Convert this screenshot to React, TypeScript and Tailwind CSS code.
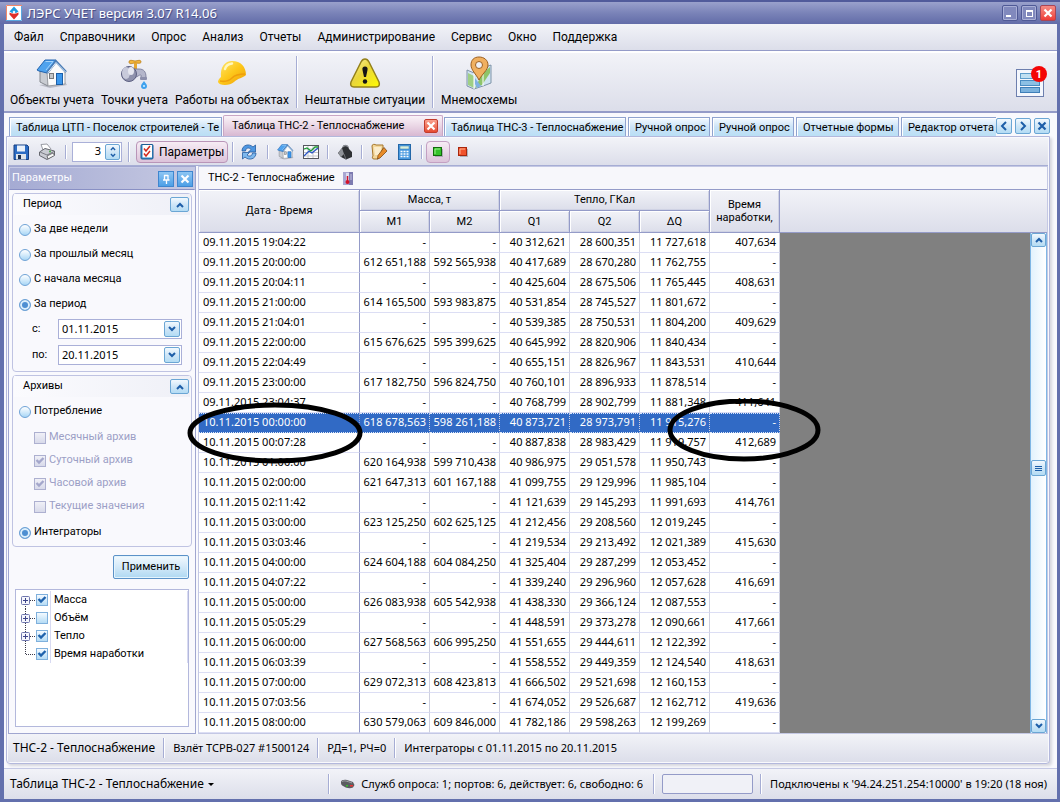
import type { ReactNode } from 'react';

type Row = [string, string, string, string, string, string, string];

const ROWS: Row[] = [
  ['09.11.2015 19:04:22', '-', '-', '40 312,621', '28 600,351', '11 727,618', '407,634'],
  ['09.11.2015 20:00:00', '612 651,188', '592 565,938', '40 417,689', '28 670,280', '11 762,755', '-'],
  ['09.11.2015 20:04:11', '-', '-', '40 425,604', '28 675,506', '11 765,445', '408,631'],
  ['09.11.2015 21:00:00', '614 165,500', '593 983,875', '40 531,854', '28 745,527', '11 801,672', '-'],
  ['09.11.2015 21:04:01', '-', '-', '40 539,385', '28 750,531', '11 804,200', '409,629'],
  ['09.11.2015 22:00:00', '615 676,625', '595 399,625', '40 645,992', '28 820,906', '11 840,434', '-'],
  ['09.11.2015 22:04:49', '-', '-', '40 655,151', '28 826,967', '11 843,531', '410,644'],
  ['09.11.2015 23:00:00', '617 182,750', '596 824,750', '40 760,101', '28 896,933', '11 878,514', '-'],
  ['09.11.2015 23:04:37', '-', '-', '40 768,799', '28 902,799', '11 881,348', '411,641'],
  ['10.11.2015 00:00:00', '618 678,563', '598 261,188', '40 873,721', '28 973,791', '11 915,276', '-'],
  ['10.11.2015 00:07:28', '-', '-', '40 887,838', '28 983,429', '11 919,757', '412,689'],
  ['10.11.2015 01:00:00', '620 164,938', '599 710,438', '40 986,975', '29 051,578', '11 950,743', '-'],
  ['10.11.2015 02:00:00', '621 647,313', '601 167,188', '41 099,755', '29 129,996', '11 985,104', '-'],
  ['10.11.2015 02:11:42', '-', '-', '41 121,639', '29 145,293', '11 991,693', '414,761'],
  ['10.11.2015 03:00:00', '623 125,250', '602 625,125', '41 212,456', '29 208,560', '12 019,245', '-'],
  ['10.11.2015 03:03:46', '-', '-', '41 219,534', '29 213,492', '12 021,389', '415,630'],
  ['10.11.2015 04:00:00', '624 604,188', '604 084,250', '41 325,404', '29 287,299', '12 053,452', '-'],
  ['10.11.2015 04:07:22', '-', '-', '41 339,240', '29 296,960', '12 057,628', '416,691'],
  ['10.11.2015 05:00:00', '626 083,938', '605 542,938', '41 438,330', '29 366,124', '12 087,553', '-'],
  ['10.11.2015 05:05:29', '-', '-', '41 448,591', '29 373,278', '12 090,661', '417,661'],
  ['10.11.2015 06:00:00', '627 568,563', '606 995,250', '41 551,655', '29 444,611', '12 122,392', '-'],
  ['10.11.2015 06:03:39', '-', '-', '41 558,552', '29 449,359', '12 124,540', '418,631'],
  ['10.11.2015 07:00:00', '629 072,313', '608 423,813', '41 666,502', '29 521,698', '12 160,153', '-'],
  ['10.11.2015 07:03:56', '-', '-', '41 674,052', '29 526,687', '12 162,712', '419,636'],
  ['10.11.2015 08:00:00', '630 579,063', '609 846,000', '41 782,186', '29 598,263', '12 199,269', '-'],
];
const SELECTED = 9;

const MENU = ['Файл', 'Справочники', 'Опрос', 'Анализ', 'Отчеты', 'Администрирование', 'Сервис', 'Окно', 'Поддержка'];

/* ---------- icons ---------- */

function LogoIcon() {
  return (
    <svg width="16" height="16" viewBox="0 0 16 16" aria-hidden="true">
      <rect width="16" height="16" fill="#fff" />
      <path d="M.5 16V.5H16" fill="none" stroke="#f0876a" />
      <path d="M15.500 1V15.500H0" fill="none" stroke="#5aa7e0" />
      <path d="M8 1.500L12.500 6.500L10 8H6L3.500 6.500Z" fill="#1e9be0" />
      <path d="M8 14.500L3.500 9.500V7.500L6 8.500H10L12.500 7.500V9.500Z" fill="#e02f28" />
      <path d="M6.500 7L8 5.500L9.500 7L8 9Z" fill="#fff" />
    </svg>
  );
}

function HouseIcon({ size }: { size: number }) {
  return (
    <svg width={size} height={size} viewBox="0 0 32 32" aria-hidden="true">
      <path d="M3 28L14 31L31 28L29 25Z" fill="#9b9eaa" fillOpacity=".6" />
      <path d="M4 14L12 15V29L4 25Z" fill="#c9ccd2" stroke="#84888f" />
      <path d="M11 15L20 4L29 14V27L12 29Z" fill="#fbfbfb" stroke="#9a9da3" />
      <path d="M1 13L9 3L20 3L11 16L3 14Z" fill="#4fa3ee" stroke="#2263ae" />
      <path d="M9.500 4.500L17 4.500L10 13" fill="none" stroke="#a5d4fb" />
      <path d="M11 16L20 4.500L30 15" fill="none" stroke="#4a7cb5" strokeWidth="2.500" />
      <path d="M12 15.500L20 5.500L29.500 15" fill="none" stroke="#e4f1fd" />
      <rect x="20.500" y="16.500" width="6" height="11" fill="#3c97ec" stroke="#1c5ea8" />
      <rect x="13.500" y="16.500" width="4" height="5" fill="#c3c6c9" stroke="#77797d" />
    </svg>
  );
}

function TapIcon() {
  return (
    <svg width="32" height="32" viewBox="0 0 32 32" aria-hidden="true">
      <path d="M10 5C10 2 15 4 16 4C18 4 22 2 22 5C22 7 18 6 16 6C14 6 10 8 10 5Z" fill="#f3b53c" stroke="#b57a17" strokeWidth=".8" />
      <rect x="15" y="6" width="3" height="6" fill="#e6a733" />
      <path d="M12 12H20C25 12 27 15 27 20V22H22V19C22 17 21 18 19 19L12 23Z" fill="#b4b6cb" stroke="#6e7190" strokeWidth=".8" />
      <circle cx="10" cy="17" r="7.500" fill="#8f92ad" stroke="#5d6082" />
      <ellipse cx="7" cy="16" rx="4" ry="6" fill="#c8cadb" />
      <ellipse cx="12" cy="14" rx="3" ry="4" fill="#e6e7f0" />
      <rect x="21" y="20" width="7" height="3" rx="1" fill="#8c8fac" />
      <path d="M25 24C26 26 28 27 28 29A2.800 2.800 0 0 1 22 29C22 27 24 26 25 24Z" fill="#3ea1ee" />
      <circle cx="25" cy="29" r="1" fill="#d6f0ff" />
    </svg>
  );
}

function HelmetIcon() {
  return (
    <svg width="32" height="32" viewBox="0 0 32 32" aria-hidden="true">
      <defs>
        <linearGradient id="helmet" x1="0" y1="0" x2="1" y2="1">
          <stop offset="0" stopColor="#ffe873" />
          <stop offset=".5" stopColor="#fdc81b" />
          <stop offset="1" stopColor="#ee9c07" />
        </linearGradient>
      </defs>
      <path d="M5 20C4 10 9 4 16 4C25 4 30 10 30 18C27 21 22 21 18 25C14 29 3 29 2 25C2 23 3 22 5 20Z" fill="url(#helmet)" />
      <path d="M4 24C9 25 13 24 16 21C20 17 25 17 29 17" fill="none" stroke="#ef9f0c" strokeWidth="1.500" />
      <path d="M9 12C10 8 12 7 16 6.500" fill="none" stroke="#fff7bd" strokeWidth="2.500" strokeLinecap="round" />
    </svg>
  );
}

function WarningIcon() {
  return (
    <svg width="34" height="32" viewBox="0 0 34 32" aria-hidden="true">
      <defs>
        <linearGradient id="warn" x1="0" y1="0" x2="1" y2="1">
          <stop offset="0" stopColor="#fdf6a8" />
          <stop offset=".45" stopColor="#e9d53a" />
          <stop offset="1" stopColor="#fffc00" />
        </linearGradient>
      </defs>
      <path d="M17 2C19 2 20 3 21 5L31 25C32 28 31 30 28 30H6C3 30 2 28 3 25L13 5C14 3 15 2 17 2Z" fill="url(#warn)" stroke="#94811a" strokeWidth="1.500" />
      <path d="M17 9.500C19 9.500 20 11 19.500 13L18 20H16L14.500 13C14 11 15 9.500 17 9.500Z" fill="#151515" />
      <circle cx="17" cy="24.500" r="2.200" fill="#151515" />
    </svg>
  );
}

function MapIcon() {
  return (
    <svg width="32" height="34" viewBox="0 0 32 34" aria-hidden="true">
      <path d="M4 14L11 17L20 12L28 9V27L20 30L11 33L4 30Z" fill="#cfe3f2" stroke="#7f93a8" />
      <path d="M5 17L11 20V32L5 29Z" fill="#9fcf85" />
      <path d="M12 32L19 18L27 11V17L19 29Z" fill="#8ec46a" />
      <path d="M12 22L18 30L14 32L12 28Z" fill="#7fb2e2" />
      <path d="M20 12L20 30M11 17V33" stroke="#fff" />
      <path d="M16 1C21 1 25 4 25 9C25 14 19 18 16 24C13 18 8 14 8 9C8 4 11 1 16 1Z" fill="#f0b060" stroke="#9c5f1e" />
      <circle cx="16" cy="9" r="3.500" fill="#eef0f6" stroke="#9c5f1e" />
    </svg>
  );
}

function NoticeIcon() {
  return (
    <svg width="32" height="32" viewBox="0 0 32 32" aria-hidden="true">
      <rect x="1.500" y="3.500" width="27" height="27" fill="#f4f7fd" stroke="#6d7fae" />
      <rect x="5.500" y="7.500" width="19" height="5" fill="#bfe0f2" stroke="#5d9dcb" />
      <rect x="5.500" y="14.500" width="19" height="5" fill="#8cc0e4" stroke="#4a8cc2" />
      <rect x="5.500" y="21.500" width="19" height="5" fill="#7bb2dd" stroke="#3f7fb8" />
    </svg>
  );
}

function SaveIcon() {
  return (
    <svg width="18" height="18" viewBox="0 0 18 18" aria-hidden="true">
      <path d="M2 2H15L16.500 3.500V16.500H2Z" fill="#2c6cc4" stroke="#173f80" />
      <rect x="5" y="2.500" width="8" height="6" fill="#e9f1fb" />
      <rect x="4" y="11" width="10" height="5.500" fill="#dfe4ea" />
      <rect x="6" y="12" width="3" height="4" fill="#1d2f4e" />
    </svg>
  );
}

function PrinterIcon() {
  return (
    <svg width="18" height="18" viewBox="0 0 18 18" aria-hidden="true">
      <path d="M5 7L3 1.500L9 1L13 6" fill="#fff" stroke="#9a9ca4" />
      <path d="M1.500 9L7 5.500L16.500 8V12L9 16.500L1.500 12.500Z" fill="#c9cbd2" stroke="#65676e" />
      <path d="M2 9L9 12L16 8.500" fill="none" stroke="#7c7e86" />
      <path d="M9 13L15 10L16.500 12.500L10 16Z" fill="#f7f7f7" stroke="#55575c" strokeWidth=".8" />
      <circle cx="12" cy="8.500" r="1" fill="#49a849" />
    </svg>
  );
}

function ChecklistIcon() {
  return (
    <svg width="16" height="18" viewBox="0 0 16 18" aria-hidden="true">
      <rect x="1" y="1.500" width="12" height="14.500" rx="1" fill="#2f86c8" stroke="#1f5d92" />
      <rect x="2.500" y="2" width="9.500" height="12.500" fill="#fdfdfd" />
      <path d="M4 5.500L6 8L10 3M4 10.500L6 13L10 8" fill="none" stroke="#d2291c" strokeWidth="1.500" />
    </svg>
  );
}

function RefreshIcon() {
  return (
    <svg width="18" height="18" viewBox="0 0 18 18" aria-hidden="true">
      <path d="M2 8C2 2 9 0 13 4L15.500 2V9H8.500L11 6.500C9 4 5.500 5 5.500 8Z" fill="#4d97e2" stroke="#245c9f" strokeWidth=".8" />
      <path d="M16 10C16 16 9 18 5 14L2.500 16V9.500H9.500L7 12C9 14 12.500 13 12.500 10Z" fill="#7db8ee" stroke="#245c9f" strokeWidth=".8" />
    </svg>
  );
}

function ChartIcon() {
  return (
    <svg width="16" height="16" viewBox="0 0 16 16" aria-hidden="true">
      <rect x=".5" y="1.500" width="15" height="13" fill="#fff" stroke="#55585e" />
      <path d="M1 5H15M1 8.500H15M1 12H15M5 2V14M10 2V14" stroke="#c3c6cc" />
      <path d="M1 12L6 7L9 9L15 4" fill="none" stroke="#2a55c8" strokeWidth="1.300" />
      <path d="M1 5L4 4L8 7L12 3H15" fill="none" stroke="#1d9a35" strokeWidth="1.300" />
    </svg>
  );
}

function WeightIcon() {
  return (
    <svg width="18" height="18" viewBox="0 0 18 18" aria-hidden="true">
      <path d="M2 10L6 5L8 2L12 3L13 6L16 9V14L10 16.500L5 14Z" fill="#2e3034" />
      <path d="M7 4C8 2 11 2 12 4" fill="none" stroke="#8a8d94" strokeWidth="1.500" />
      <path d="M2 10L6 5L8 11L5 14Z" fill="#8f9298" />
      <path d="M8 11L10 16.500" stroke="#6c6f75" />
    </svg>
  );
}

function ScrollEditIcon() {
  return (
    <svg width="18" height="18" viewBox="0 0 18 18" aria-hidden="true">
      <path d="M2 3C2 1 5 1 6 2H13V5L8 16H4C2 16 2 14 3 13Z" fill="#f3d79b" stroke="#a6762a" />
      <path d="M4 4H11V12H5Z" fill="#fbeccb" />
      <path d="M14 4.500L17 8L10 15L7.500 16L8 12.500Z" fill="#e88b28" stroke="#7c4b17" strokeWidth=".8" />
    </svg>
  );
}

function CalcIcon() {
  return (
    <svg width="16" height="18" viewBox="0 0 16 18" aria-hidden="true">
      <rect x="1.500" y="1.500" width="12" height="15" fill="#4b9be0" stroke="#2367a8" />
      <rect x="3" y="3" width="9" height="3" fill="#d9efdc" stroke="#3277b0" strokeWidth=".5" />
      <path d="M3.500 8.500H12M3.500 11H12M3.500 13.500H12" stroke="#fff" strokeWidth="1.500" strokeDasharray="2 1" />
    </svg>
  );
}

function SquareIcon({ tone }: { tone: 'green' | 'red' }) {
  return (
    <svg width="12" height="12" viewBox="0 0 12 12" aria-hidden="true">
      <rect x="3" y="3" width="8" height="8" fill="#8d8f9a" opacity=".6" />
      <rect x="1.500" y="1.500" width="8" height="8" fill={tone === 'green' ? '#35c22a' : '#f0522c'} stroke={tone === 'green' ? '#126b0c' : '#a8270d'} />
      <path d="M3 8V3H8" fill="none" stroke={tone === 'green' ? '#9cf08a' : '#ffb08e'} />
    </svg>
  );
}

function ThermoIcon() {
  return (
    <svg width="10" height="13" viewBox="0 0 10 13" aria-hidden="true">
      <rect width="10" height="13" fill="#a9a7d2" />
      <rect x="6" width="4" height="13" fill="#7d7bb0" />
      <rect x="3" y="1" width="3" height="9" fill="#dcdcf0" />
      <path d="M4.500 4V10" stroke="#d3122a" strokeWidth="1.500" />
      <circle cx="4.500" cy="10" r="2" fill="#d3122a" />
      <path d="M7 3H9M7 5H9M7 7H9" stroke="#d9d8f0" strokeWidth=".8" />
    </svg>
  );
}

function ModemIcon() {
  return (
    <svg width="15" height="10" viewBox="0 0 15 10" aria-hidden="true">
      <path d="M1 3C1 1 4 .5 7 1L13 3L14.500 6L13 8.500C10 10 6 9 4 7.500C1 6 1 5 1 3Z" fill="#5b5d61" />
      <path d="M2 3C3 1 7 2 12 4" fill="none" stroke="#a1a3a8" />
      <rect x="6" y="6" width="2" height="1.500" fill="#35c22a" />
      <rect x="10" y="6" width="3" height="1.500" fill="#e33" />
    </svg>
  );
}

function Chevron({ dir, className }: { dir: 'up' | 'down' | 'left' | 'right'; className?: string }) {
  const d = { up: 'M2 7L5 4L8 7', down: 'M2 3L5 6L8 3', left: 'M7 1L3 5L7 9', right: 'M3 1L7 5L3 9' }[dir];
  return (
    <svg width="10" height="10" viewBox="0 0 10 10" aria-hidden="true" className={className}>
      <path d={d} fill="none" stroke="currentColor" strokeWidth="2" />
    </svg>
  );
}

function Cross() {
  return (
    <svg width="10" height="10" viewBox="0 0 10 10" aria-hidden="true">
      <path d="M1.500 1.500L8.500 8.500M8.500 1.500L1.500 8.500" stroke="currentColor" strokeWidth="2.200" />
    </svg>
  );
}

/* ---------- controls ---------- */

const BAR = 'bg-linear-to-b from-[#f2f3f8] to-[#dcdeea]';
const BLUE = 'border border-[#6ba6d4] bg-linear-to-b from-[#f2f9fe] via-[#cfe6f7] to-[#b3dcf4] text-[#1d5ea8]';
const NOTO = "font-['Noto_Sans',sans-serif]";

function BigButton({ icon, label }: { icon: ReactNode; label: string }) {
  return (
    <button type="button" className="flex flex-col items-center justify-between">
      <span className="flex h-[34px] items-center">{icon}</span>
      <span className="leading-4">{label}</span>
    </button>
  );
}

function Sep({ className = 'h-5' }: { className?: string }) {
  return <span className={`w-0.5 shrink-0 border-l border-r border-l-[#a6add4] border-r-white ${className}`} />;
}

function IconButton({ label, children }: { label: string; children: ReactNode }) {
  return (
    <button type="button" aria-label={label} className="grid size-[26px] shrink-0 place-items-center">
      {children}
    </button>
  );
}

function Tab({ children, className = '' }: { children: ReactNode; className?: string }) {
  return (
    <button
      type="button"
      role="tab"
      aria-selected="false"
      className={`h-[19px] overflow-hidden border border-b-0 border-[#8fa3cf] bg-linear-to-b from-[#f4faff] via-[#cbe3f7] to-[#b9dff5] px-1.5 text-left leading-[19px] whitespace-nowrap shadow-[inset_1px_1px_0_#fff] ${className}`}
    >
      {children}
    </button>
  );
}

function Radio({ label, checked }: { label: string; checked?: boolean }) {
  return (
    <label className="flex h-[25px] items-center gap-[3px]">
      <input
        type="radio"
        name={label}
        defaultChecked={checked}
        className="size-3 appearance-none rounded-full border border-[#6fa3d6] bg-linear-to-b from-[#ffffff] via-[#d4ebfb] to-[#a8d6f5] checked:bg-none checked:bg-[#4d8fd2] checked:shadow-[inset_0_0_0_2px_#dceffc]"
      />
      {label}
    </label>
  );
}

function Check({ label, checked, disabled, hidden }: { label: string; checked?: boolean; disabled?: boolean; hidden?: boolean }) {
  return (
    <label className={`flex items-center gap-[3px] ${disabled ? 'h-[23px] text-[#9c9fc6]' : ''}`}>
      <span className="grid size-3 place-items-center">
        <input
          type="checkbox"
          defaultChecked={checked}
          disabled={disabled}
          aria-label={label}
          className={`size-3 appearance-none border [grid-area:1/1] ${
            disabled
              ? 'border-[#adb0d0] bg-linear-to-b from-[#f0f0f7] to-[#d8daea]'
              : 'border-[#7fb0dc] bg-linear-to-b from-[#f4faff] to-[#b5dcf5]'
          }`}
        />
        {checked && (
          <svg width="10" height="10" viewBox="0 0 10 10" aria-hidden="true" className="pointer-events-none [grid-area:1/1]">
            <path d="M1.500 4L4 6.500L8.500 2" fill="none" stroke={disabled ? '#a4a7cb' : '#1f62ac'} strokeWidth="2.400" />
          </svg>
        )}
      </span>
      {hidden ? null : label}
    </label>
  );
}

function DateField({ id, label, value }: { id: string; label: string; value: string }) {
  return (
    <div className="flex h-5 items-center">
      <label htmlFor={id} className="w-[26px]">{label}</label>
      <div className="flex h-5 flex-1 items-center border border-[#aab0d8] bg-white pr-px">
        <input id={id} defaultValue={value} className={`w-0 flex-1 bg-transparent px-[3px] outline-none ${NOTO}`} />
        <button type="button" aria-label="Выбрать дату" className={`grid size-4 place-items-center rounded-xs ${BLUE}`}>
          <Chevron dir="down" />
        </button>
      </div>
    </div>
  );
}

function Group({ title, children }: { title: string; children: ReactNode }) {
  return (
    <section className="rounded-sm border border-[#bfc3e2] bg-[#f9f9fd] px-px">
      <header className="flex h-[21px] items-center justify-between bg-linear-to-r from-[#fbfbfe] to-[#eff0f7] pr-px pl-[9px]">
        <h3>{title}</h3>
        <button type="button" aria-label="Свернуть" className={`grid h-[15px] w-[19px] place-items-center rounded-xs ${BLUE}`}>
          <Chevron dir="up" />
        </button>
      </header>
      {children}
    </section>
  );
}

function TreeItem({ label, checked, first, leaf }: { label: string; checked?: boolean; first?: boolean; leaf?: boolean }) {
  const stem = first ? 'M9.500 9V18' : leaf ? 'M9.500 0V9.500' : 'M9.500 0V18';
  return (
    <li className="flex h-[18px] items-stretch">
      <span className="grid w-5 shrink-0 place-items-center">
        <svg width="20" height="18" viewBox="0 0 20 18" aria-hidden="true">
          <path d={stem} stroke="#3a3a4a" strokeDasharray="1 1" />
          <path d="M10 9.500H20" stroke="#3a3a4a" strokeDasharray="1 1" />
          {!leaf && (
            <>
              <rect x="5.500" y="5.500" width="8" height="8" rx="1" fill="#f5f6fc" stroke="#6f76ad" />
              <path d="M7 9.500H12M9.500 7V12" stroke="#3d4488" />
            </>
          )}
        </svg>
      </span>
      <span className="flex w-[15px] items-center border-r border-[#d8daf2]">
        <Check label={label} checked={checked} hidden />
      </span>
      <span className="flex-1 self-center border-r border-[#d8daf2] pl-[3px] leading-[18px]">{label}</span>
    </li>
  );
}

const TH = `border-r border-b border-[#949bc8] font-normal shadow-[inset_1px_1px_0_#fff,inset_-1px_-1px_0_#cfd2e4] ${BAR}`;

export default function App() {
  return (
    <div className="flex min-h-screen flex-col border-r-[3px] border-b-4 border-l-4 border-[#6370ad] bg-[#f9f9fd] font-['Roboto','Noto_Sans',sans-serif] text-xs text-black">
      {/* title bar */}
      <div className="-mr-[3px] -ml-1 flex h-6 items-center border-t-2 border-[#515b9b] bg-linear-to-b from-[#9aa1cc] via-[#7a83b8] to-[#626ca8] pr-1 pl-1.5">
        <LogoIcon />
        <h1 className={`flex-1 pl-[5px] text-[13px] leading-5 text-white [text-shadow:1px_1px_1px_#3c4580] ${NOTO}`}>
          ЛЭРС УЧЕТ версия 3.07 R14.06
        </h1>
        <div className="flex gap-[3px]">
          <button type="button" aria-label="Свернуть" className="flex size-4 items-end rounded-xs border border-[#4f5996] bg-[#8189bd] p-[3px] shadow-[inset_0_0_0_1px_#a9afd6]">
            <span className="h-0.5 w-[5px] bg-white" />
          </button>
          <button type="button" aria-label="Развернуть" className="grid size-4 place-items-center rounded-xs border border-[#4f5996] bg-[#8189bd] shadow-[inset_0_0_0_1px_#a9afd6]">
            <span className="h-[7px] w-[7px] border border-t-2 border-white" />
          </button>
          <button type="button" aria-label="Закрыть" className="grid size-4 place-items-center rounded-xs border border-[#a94555] bg-linear-to-b from-[#f58a84] to-[#ee3a36] text-white">
            <Cross />
          </button>
        </div>
      </div>

      {/* main menu */}
      <nav className={`flex h-[27px] items-center gap-4 border-b border-[#949bc8] pl-2.5 ${BAR}`}>
        {MENU.map((m) => (
          <button key={m} type="button">{m}</button>
        ))}
      </nav>

      {/* main toolbar */}
      <div className={`flex h-[62px] items-stretch border-t-2 border-b-2 border-t-white border-b-[#949bc8] py-[3px] pl-1.5 ${BAR}`}>
        <div className="flex gap-[7px]">
          <BigButton icon={<HouseIcon size={32} />} label="Объекты учета" />
          <BigButton icon={<TapIcon />} label="Точки учета" />
          <BigButton icon={<HelmetIcon />} label="Работы на объектах" />
          <Sep className="h-full" />
          <BigButton icon={<WarningIcon />} label="Нештатные ситуации" />
          <Sep className="h-full" />
          <BigButton icon={<MapIcon />} label="Мнемосхемы" />
        </div>
        <button type="button" aria-label="Уведомления" className="relative mr-2.5 ml-auto self-center">
          <NoticeIcon />
          <span className="absolute top-0 right-0 grid size-4 place-items-center rounded-full bg-[#f40505] text-[11px] leading-none font-bold text-white">1</span>
        </button>
      </div>

      {/* document area */}
      <main className="flex flex-1 flex-col pr-[7px] pb-1 pl-0.5">
        <div className="flex items-end pt-0.5 pl-[3px] text-[11px]">
          <div role="tablist" className="flex min-w-0 flex-1 items-end gap-0.5 overflow-hidden">
            <Tab className="w-[213px] shrink-0">Таблица ЦТП - Поселок строителей - Те</Tab>
            <div className="-mx-px flex h-[21px] w-[220px] shrink-0 items-center justify-between rounded-t-xs border border-b-0 border-[#c9a6c4] bg-linear-to-b from-[#faf3f8] via-[#ead6e5] to-[#d8b8d2] pr-1 pl-2">
              <button type="button" role="tab" aria-selected="true" className="whitespace-nowrap">Таблица ТНС-2 - Теплоснабжение</button>
              <button type="button" aria-label="Закрыть вкладку" className="grid size-[14px] place-items-center rounded-xs border border-[#c23c2c] bg-linear-to-b from-[#f9a08e] to-[#e6482f] text-white">
                <Cross />
              </button>
            </div>
            <Tab className="w-[182px] shrink-0">Таблица ТНС-3 - Теплоснабжение</Tab>
            <Tab className="w-[82px] shrink-0">Ручной опрос</Tab>
            <Tab className="w-[82px] shrink-0">Ручной опрос</Tab>
            <Tab className="w-[103px] shrink-0">Отчетные формы</Tab>
            <Tab className="w-[110px] shrink-0">Редактор отчета</Tab>
          </div>
          <div className="flex gap-[3px] pb-0.5">
            <button type="button" aria-label="Предыдущие вкладки" className={`grid size-4 place-items-center rounded-xs ${BLUE}`}><Chevron dir="left" /></button>
            <button type="button" aria-label="Следующие вкладки" className={`grid size-4 place-items-center rounded-xs ${BLUE}`}><Chevron dir="right" /></button>
            <button type="button" aria-label="Закрыть" className={`grid size-4 place-items-center rounded-xs ${BLUE}`}><Cross /></button>
          </div>
        </div>

        <div className="flex flex-1 flex-col rounded-b-sm border border-[#b3b8dc] bg-[#f9f9fd] p-px shadow-[2px_2px_3px_#d5d6de]">
          {/* document toolbar */}
          <div className={`flex h-7 items-center border-b border-[#a6add4] ${BAR}`}>
            <IconButton label="Сохранить"><SaveIcon /></IconButton>
            <IconButton label="Печать"><PrinterIcon /></IconButton>
            <div className="px-[5px]"><Sep /></div>
            <div className="mr-1.5 flex h-5 w-[50px] items-center border border-[#aab0d8] bg-white pr-px">
              <input aria-label="Точность" defaultValue="3" className={`w-0 flex-1 bg-transparent pr-1 text-right text-[11px] outline-none ${NOTO}`} />
              <span className={`flex h-4 w-[15px] flex-col items-center justify-center rounded-xs ${BLUE}`}>
                <button type="button" aria-label="Больше" className="h-[7px] overflow-hidden"><Chevron dir="up" className="h-[7px]" /></button>
                <button type="button" aria-label="Меньше" className="h-[7px] overflow-hidden"><Chevron dir="down" className="h-[7px]" /></button>
              </span>
            </div>
            <Sep />
            <button type="button" className="mr-1 ml-1.5 flex h-[22px] items-center gap-[3px] rounded-sm border border-[#b995b8] bg-linear-to-b from-[#f6ecf4] to-[#dcc3da] px-[3px]">
              <ChecklistIcon />
              Параметры
            </button>
            <Sep />
            <div className="px-0.5"><IconButton label="Обновить"><RefreshIcon /></IconButton></div>
            <div className="px-[3px]"><Sep /></div>
            <IconButton label="Объект"><HouseIcon size={17} /></IconButton>
            <IconButton label="График"><ChartIcon /></IconButton>
            <div className="px-[3px]"><Sep /></div>
            <IconButton label="Тарировка"><WeightIcon /></IconButton>
            <div className="px-[3px]"><Sep /></div>
            <IconButton label="Правка"><ScrollEditIcon /></IconButton>
            <IconButton label="Расчет"><CalcIcon /></IconButton>
            <div className="px-[3px]"><Sep /></div>
            <button type="button" aria-label="Включено" className="grid h-[22px] w-6 place-items-center rounded-sm border border-[#c3a0c2] bg-linear-to-b from-[#f6ecf4] to-[#dcc3da]">
              <SquareIcon tone="green" />
            </button>
            <IconButton label="Остановить"><SquareIcon tone="red" /></IconButton>
          </div>

          <div className="flex flex-1 gap-0.5 text-[11px]">
            {/* parameters pane */}
            <aside className="flex w-[188px] shrink-0 flex-col border border-[#a0a6d0] bg-[#f9f9fd]">
              <div className="flex h-[23px] items-center gap-[3px] border border-b-[#8990c4] border-[#c4c8e4] bg-linear-to-r from-[#a5abd3] to-[#c6c9e2] pr-px pl-0.5 text-[#fdfdff]">
                <h2 className="flex-1">Параметры</h2>
                <button type="button" aria-label="Закрепить" className="grid size-4 place-items-center border border-[#3f86cf] bg-linear-to-b from-[#8ec5f3] to-[#4c9fe6]">
                  <svg width="10" height="10" viewBox="0 0 10 10" aria-hidden="true">
                    <path d="M3 1.500H7M3.500 1V6M7 1V6M2 6H8.500M5.500 6V10" fill="none" stroke="currentColor" strokeWidth="1.300" />
                  </svg>
                </button>
                <button type="button" aria-label="Закрыть панель" className="grid size-4 place-items-center border border-[#3f86cf] bg-linear-to-b from-[#8ec5f3] to-[#4c9fe6]">
                  <Cross />
                </button>
              </div>
              <div className="flex flex-1 flex-col px-[3px] pt-[3px] pb-1.5">
                <Group title="Период">
                  <div className="flex flex-col px-[5px] pt-0.5 pb-1">
                    <Radio label="За две недели" />
                    <Radio label="За прошлый месяц" />
                    <Radio label="С начала месяца" />
                    <Radio label="За период" checked />
                    <div className="flex flex-col gap-1.5 pt-0.5 pr-[3px] pb-0.5 pl-[13px]">
                      <DateField id="date-from" label="с:" value="01.11.2015" />
                      <DateField id="date-to" label="по:" value="20.11.2015" />
                    </div>
                  </div>
                </Group>
                <div className="h-[3px]" />
                <Group title="Архивы">
                  <div className="flex flex-col px-[5px] pt-0.5 pb-px">
                    <Radio label="Потребление" />
                    <div className="pt-0.5 pb-0.5 pl-[15px]">
                      <Check label="Месячный архив" disabled />
                      <Check label="Суточный архив" disabled checked />
                      <Check label="Часовой архив" disabled checked />
                      <Check label="Текущие значения" disabled />
                    </div>
                    <Radio label="Интеграторы" checked />
                  </div>
                </Group>
                <button type="button" className="mt-2 mr-[3px] mb-2.5 h-6 w-[76px] self-end rounded-xs border border-[#5b92c8] bg-linear-to-b from-[#f2f9fe] via-[#d3e9f8] to-[#aed8f2] shadow-[inset_0_0_0_1px_#e4f4fd]">
                  Применить
                </button>
                <ul className="mx-[3px] flex-1 border border-[#b3b8dc] bg-white pt-px">
                  <TreeItem label="Масса" checked first />
                  <TreeItem label="Объём" />
                  <TreeItem label="Тепло" checked />
                  <TreeItem label="Время наработки" checked leaf />
                </ul>
              </div>
            </aside>

            {/* readings */}
            <section className="relative flex min-w-0 flex-1 flex-col border border-[#c4c8e4]">
              <div className="flex h-[22px] items-center gap-2 bg-[#f7f7fb] pl-[9px]">
                <h2>ТНС-2 - Теплоснабжение</h2>
                <ThermoIcon />
              </div>
              <div className="flex flex-1 border-t border-[#949bc8]">
                <table className="w-[581px] shrink-0 table-fixed border-separate border-spacing-0 self-start bg-white">
                  <colgroup>
                    <col className="w-[161px]" />
                    <col className="w-[70px]" />
                    <col className="w-[70px]" />
                    <col className="w-[70px]" />
                    <col className="w-[70px]" />
                    <col className="w-[70px]" />
                    <col className="w-[70px]" />
                  </colgroup>
                  <thead>
                    <tr className="h-[21px]">
                      <th rowSpan={2} className={TH}>Дата - Время</th>
                      <th colSpan={2} className={`h-[21px] leading-4 ${TH}`}>Масса, т</th>
                      <th colSpan={3} className={`h-[21px] leading-4 ${TH}`}>Тепло, ГКал</th>
                      <th rowSpan={2} className={`leading-[13px] ${TH}`}>Время наработки,</th>
                    </tr>
                    <tr className="h-[22px]">
                      {['M1', 'M2', 'Q1', 'Q2', 'ΔQ'].map((h) => (
                        <th key={h} className={`h-[22px] leading-4 ${TH}`}>{h}</th>
                      ))}
                    </tr>
                  </thead>
                  <tbody className={NOTO}>
                    {ROWS.map((r, i) => (
                      <tr key={r[0]} className={i === SELECTED ? 'bg-[#316ac5] text-white' : ''}>
                        {r.map((v, c) => (
                          <td
                            key={c}
                            className={`h-5 border-b pt-0 pb-0.5 leading-4 whitespace-nowrap ${
                              i === SELECTED ? 'border-t border-dotted border-y-[#dce6f8]' : 'border-b-[#dcdef4]'
                            } ${c === 0 ? 'border-r border-r-[#949bc8] pl-1 text-left' : 'border-r border-r-[#cdcfdf] pr-[3px] text-right'}`}
                          >
                            {v}
                          </td>
                        ))}
                      </tr>
                    ))}
                  </tbody>
                </table>
                <div className="flex flex-1 flex-col">
                  <div className={`h-[43px] border-b border-[#949bc8] ${BAR}`} />
                  <div className="flex flex-1 bg-[#808080]">
                    <div className="ml-auto flex w-[17px] flex-col border-x border-[#7fb6e4] bg-linear-to-r from-[#e2f2fd] to-white">
                      <button type="button" aria-label="Вверх" className={`grid h-[14px] place-items-center rounded-xs ${BLUE}`}><Chevron dir="up" /></button>
                      <div className="flex-[213]" />
                      <button type="button" aria-label="Полоса прокрутки" className={`grid h-4 place-items-center rounded-xs ${BLUE}`}>
                        <span className="flex flex-col gap-px">
                          <span className="h-px w-[7px] bg-[#1d5ea8]" />
                          <span className="h-px w-[7px] bg-[#1d5ea8]" />
                          <span className="h-px w-[7px] bg-[#1d5ea8]" />
                        </span>
                      </button>
                      <div className="flex-[243]" />
                      <button type="button" aria-label="Вниз" className={`grid h-[14px] place-items-center rounded-xs ${BLUE}`}><Chevron dir="down" /></button>
                    </div>
                  </div>
                </div>
              </div>
              {/* hand-drawn marks over the table */}
              <svg className="pointer-events-none absolute top-[232px] -left-[14px]" width="640" height="70" viewBox="0 0 640 70" aria-hidden="true">
                <ellipse cx="90" cy="34" rx="85" ry="28" fill="none" stroke="#000" strokeWidth="5" />
                <ellipse cx="559" cy="31" rx="74" ry="29" fill="none" stroke="#000" strokeWidth="5" />
              </svg>
            </section>
          </div>

          {/* document status bar */}
          <div className={`flex h-7 items-center gap-2 pl-[5px] text-[11px] ${NOTO} ${BAR}`}>
            <span className="text-xs">ТНС-2 - Теплоснабжение</span>
            <Sep />
            <span>Взлёт ТСРВ-027 #1500124</span>
            <Sep />
            <span>РД=1, РЧ=0</span>
            <Sep />
            <span>Интеграторы с 01.11.2015 по 20.11.2015</span>
          </div>
        </div>
      </main>

      {/* status bar */}
      <footer className={`flex h-[31px] items-center border-t border-[#c4c8e4] pr-2.5 pl-1.5 text-[11px] ${NOTO} ${BAR}`}>
        <button type="button" className="flex items-center gap-1 text-xs">
          Таблица ТНС-2 - Теплоснабжение
          <span className="border-x-[3px] border-t-[3px] border-x-transparent border-t-black" />
        </button>
        <span className="flex-1" />
        <Sep />
        <span className="flex items-center gap-1.5 px-2.5">
          <ModemIcon />
          Служб опроса: 1; портов: 6, действует: 6, свободно: 6
        </span>
        <Sep />
        <span className="mx-[7px] h-5 w-[91px] rounded-xs border border-[#949bc8] bg-[#f0f1f7]" />
        <Sep />
        <span className="pl-2">Подключены к '94.24.251.254:10000' в 19:20 (18 ноя)</span>
      </footer>
    </div>
  );
}
